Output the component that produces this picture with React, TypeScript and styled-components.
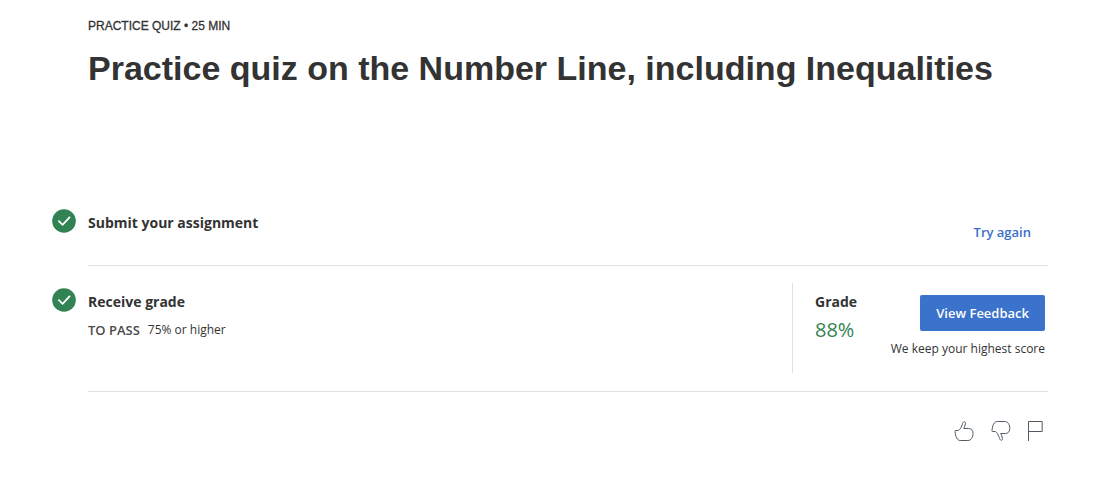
import React from "react";
import styled, { createGlobalStyle } from "styled-components";

const GlobalStyle = createGlobalStyle`
  * { box-sizing: border-box; }
  body {
    margin: 0;
    background: #fff;
    color: #333;
    font-family: "Open Sans", "Noto Sans", sans-serif;
    font-size: 14px;
    line-height: 20px;
  }
  h1, h2, p { margin: 0; }
`;

const Page = styled.main`
  padding: 16px 49px 32px 52px;
`;

const Header = styled.header`
  padding-left: 36px;
  margin-bottom: 112px;
  font-family: "Liberation Sans", Arial, sans-serif;
`;

const Eyebrow = styled.p`
  font-size: 12px;
  font-weight: 400;
  -webkit-text-stroke: 0.3px #333;
`;

const Title = styled.h1`
  margin-top: 10px;
  font-size: 34px;
  line-height: 44px;
  font-weight: 700;
`;

const Step = styled.section`
  display: flex;
  gap: 12px;
`;

const StepBody = styled.div<{ $height: number }>`
  display: flex;
  flex: 1;
  justify-content: space-between;
  min-height: ${(p) => p.$height}px;
  border-bottom: 1px solid #e1e1e1;
`;

const StepIcon = styled.svg<{ $top: number }>`
  flex: none;
  width: 24px;
  height: 24px;
  margin-top: ${(p) => p.$top}px;
`;

const StepText = styled.div<{ $top: number }>`
  padding-top: ${(p) => p.$top}px;
`;

const Heading = styled.h2`
  font-size: 14px;
  line-height: 20px;
  font-weight: 700;
`;

const Requirement = styled.p`
  display: flex;
  gap: 8px;
  margin-top: 8px;
  font-size: 12px;
`;

const RequirementLabel = styled.span`
  color: #4a4a4a;
  font-size: 13px;
  font-weight: 600;
`;

const TryAgain = styled.a`
  align-self: flex-start;
  padding: 20px 17px 0 0;
  color: #3b6fc7;
  font-size: 13px;
  font-weight: 600;
  text-decoration: none;
`;

const GradePanel = styled.div`
  display: flex;
  justify-content: space-between;
  flex: none;
  width: 256px;
  margin: 17px 0 18px;
  padding: 9px 3px 0 22px;
  border-left: 1px solid #e1e1e1;
`;

const GradeValue = styled.p`
  margin-top: 4px;
  color: #328354;
  font-size: 20px;
  line-height: 28px;
`;

const Feedback = styled.div`
  display: flex;
  flex-direction: column;
  align-items: flex-end;
  gap: 8px;
  padding-top: 3px;
  font-size: 12px;
`;

const FeedbackButton = styled.button`
  height: 36px;
  padding: 0 16px;
  border: 0;
  border-radius: 2px;
  background: #3b72cb;
  color: #fff;
  font: 600 13px/20px "Open Sans", "Noto Sans", sans-serif;
  cursor: pointer;
`;

const Reactions = styled.footer`
  display: flex;
  justify-content: flex-end;
  gap: 12px;
  padding-top: 27px;
`;

const ReactionButton = styled.button`
  display: flex;
  width: 24px;
  height: 24px;
  padding: 0;
  border: 0;
  background: none;
  cursor: pointer;
`;

const ReactionIcon = styled.svg`
  width: 24px;
  height: 24px;
  fill: none;
  stroke: #525a66;
  stroke-width: 1;
  stroke-linejoin: round;
`;

const thumbUp =
  "M3 12.5C2.7 11.7 3 11.5 4 11.5H6C7.8 11.3 9.6 8 10.7 4.3C11.4 2 13.7 2.2 13.5 4.4C13.3 6.2 12.5 8 11.8 9.5H16.5C19.4 9.5 21 11.6 21 14.3C21 18.4 19.2 21.5 15.8 21.5H8.3C5 21.5 3.5 17.5 3 12.5Z";

const thumbDown =
  "M4 11.5C3.7 12.3 4 12.5 5 12.5H7C8.8 12.7 10.4 16 11.7 19.7C12.5 22 14.6 21.8 14.4 19.6C14.2 17.8 13.4 16 12.7 14.5H17.3C20.2 14.5 21.8 12.4 21.8 9.7C21.8 5.6 20 2.5 16.6 2.5H9.3C6 2.5 4.5 6.5 4 11.5Z";

function CompletedIcon({ top }: { top: number }) {
  return (
    <StepIcon $top={top} viewBox="0 0 24 24" role="img" aria-label="Completed">
      <circle cx="12" cy="12" r="11.8" fill="#328354" />
      <path d="M6.4 11.6L10.6 15.8L18 7.8" fill="none" stroke="#fff" strokeWidth="1.8" />
    </StepIcon>
  );
}

export default function App() {
  return (
    <>
      <GlobalStyle />
      <Page>
        <Header>
          <Eyebrow>PRACTICE QUIZ • 25 MIN</Eyebrow>
          <Title>Practice quiz on the Number Line, including Inequalities</Title>
        </Header>

        <Step>
          <CompletedIcon top={7} />
          <StepBody $height={64}>
            <StepText $top={11}>
              <Heading>Submit your assignment</Heading>
            </StepText>
            <TryAgain href="#try-again">Try again</TryAgain>
          </StepBody>
        </Step>

        <Step>
          <CompletedIcon top={22} />
          <StepBody $height={126}>
            <StepText $top={26}>
              <Heading>Receive grade</Heading>
              <Requirement>
                <RequirementLabel>TO PASS</RequirementLabel>
                <span>75% or higher</span>
              </Requirement>
            </StepText>
            <GradePanel>
              <div>
                <Heading>Grade</Heading>
                <GradeValue>88%</GradeValue>
              </div>
              <Feedback>
                <FeedbackButton type="button">View Feedback</FeedbackButton>
                <p>We keep your highest score</p>
              </Feedback>
            </GradePanel>
          </StepBody>
        </Step>

        <Reactions>
          <ReactionButton type="button" aria-label="Like">
            <ReactionIcon viewBox="0 0 24 24">
              <path d={thumbUp} />
            </ReactionIcon>
          </ReactionButton>
          <ReactionButton type="button" aria-label="Dislike">
            <ReactionIcon viewBox="0 0 24 24">
              <path d={thumbDown} />
            </ReactionIcon>
          </ReactionButton>
          <ReactionButton type="button" aria-label="Report a problem">
            <ReactionIcon viewBox="0 0 24 24">
              <path d="M4.5 22V2.5H18.2V12.5H4.5" />
            </ReactionIcon>
          </ReactionButton>
        </Reactions>
      </Page>
    </>
  );
}
